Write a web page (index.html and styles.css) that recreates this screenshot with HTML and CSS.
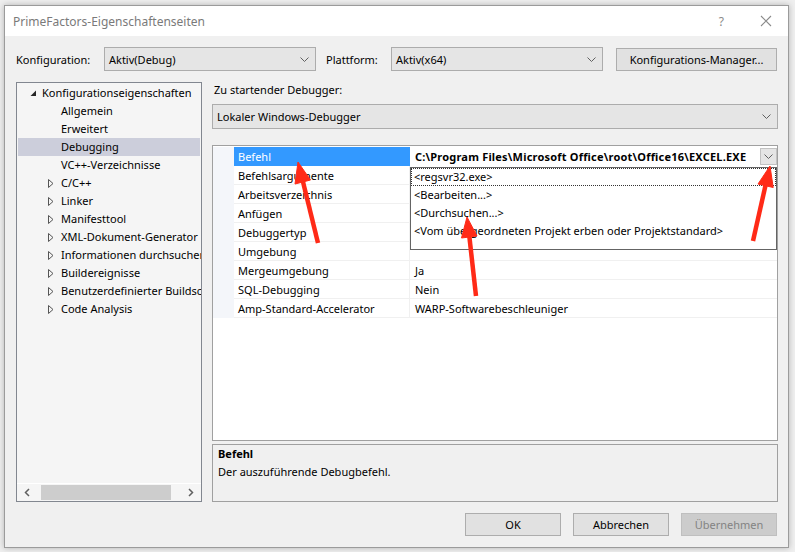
FILE: index.html
```html
<!DOCTYPE html>
<html lang="de">
<head>
    <meta charset="UTF-8">
    <title>PrimeFactors-Eigenschaftenseiten</title>
    <link rel="stylesheet" href="styles.css">
</head>
<body>
    <div class="window">
        <!-- Titelleiste -->
        <div class="titlebar">
            <span class="title">PrimeFactors-Eigenschaftenseiten</span>
            <div class="caption-buttons">
                <span class="help">?</span>
                <svg class="close" width="12" height="12" viewBox="0 0 12 12"><path d="M1 1L11 11M11 1L1 11" stroke="#8a8a8a" stroke-width="1.1" fill="none"/></svg>
            </div>
        </div>

        <div class="content">
            <!-- Konfiguration / Plattform -->
            <div class="config-row">
                <span class="field-label label-config">Konfiguration:</span>
                <div class="combo combo-config">
                    <span>Aktiv(Debug)</span>
                    <svg class="chevron" width="9" height="5" viewBox="0 0 9 5"><path d="M0.5 0.5L4.5 4.5L8.5 0.5" stroke="#606060" fill="none"/></svg>
                </div>
                <span class="field-label label-platform">Plattform:</span>
                <div class="combo combo-platform">
                    <span>Aktiv(x64)</span>
                    <svg class="chevron" width="9" height="5" viewBox="0 0 9 5"><path d="M0.5 0.5L4.5 4.5L8.5 0.5" stroke="#606060" fill="none"/></svg>
                </div>
                <button class="btn btn-manager">Konfigurations-Manager...</button>
            </div>

            <div class="main">
                <!-- Baum -->
                <div class="tree">
                    <ul class="tree-list">
                        <li class="node level0">
                            <svg class="expander" width="7" height="7" viewBox="0 0 7 7"><path d="M6 0.5L6 6L0.5 6Z" fill="#262626"/></svg>
                            <span>Konfigurationseigenschaften</span>
                        </li>
                        <li class="node level1"><span>Allgemein</span></li>
                        <li class="node level1"><span>Erweitert</span></li>
                        <li class="node level1 selected"><span>Debugging</span></li>
                        <li class="node level1"><span>VC++-Verzeichnisse</span></li>
                        <li class="node level1 collapsed"><svg class="expander" width="6" height="9" viewBox="0 0 6 9"><path d="M0.5 0.5L5 4.5L0.5 8.5Z" stroke="#555" fill="none"/></svg><span>C/C++</span></li>
                        <li class="node level1 collapsed"><svg class="expander" width="6" height="9" viewBox="0 0 6 9"><path d="M0.5 0.5L5 4.5L0.5 8.5Z" stroke="#555" fill="none"/></svg><span>Linker</span></li>
                        <li class="node level1 collapsed"><svg class="expander" width="6" height="9" viewBox="0 0 6 9"><path d="M0.5 0.5L5 4.5L0.5 8.5Z" stroke="#555" fill="none"/></svg><span>Manifesttool</span></li>
                        <li class="node level1 collapsed"><svg class="expander" width="6" height="9" viewBox="0 0 6 9"><path d="M0.5 0.5L5 4.5L0.5 8.5Z" stroke="#555" fill="none"/></svg><span>XML-Dokument-Generator</span></li>
                        <li class="node level1 collapsed"><svg class="expander" width="6" height="9" viewBox="0 0 6 9"><path d="M0.5 0.5L5 4.5L0.5 8.5Z" stroke="#555" fill="none"/></svg><span>Informationen durchsuchen</span></li>
                        <li class="node level1 collapsed"><svg class="expander" width="6" height="9" viewBox="0 0 6 9"><path d="M0.5 0.5L5 4.5L0.5 8.5Z" stroke="#555" fill="none"/></svg><span>Buildereignisse</span></li>
                        <li class="node level1 collapsed"><svg class="expander" width="6" height="9" viewBox="0 0 6 9"><path d="M0.5 0.5L5 4.5L0.5 8.5Z" stroke="#555" fill="none"/></svg><span>Benutzerdefinierter Buildschritt</span></li>
                        <li class="node level1 collapsed"><svg class="expander" width="6" height="9" viewBox="0 0 6 9"><path d="M0.5 0.5L5 4.5L0.5 8.5Z" stroke="#555" fill="none"/></svg><span>Code Analysis</span></li>
                    </ul>
                    <div class="hscroll">
                        <svg class="scroll-arrow" width="6" height="9" viewBox="0 0 6 9"><path d="M5 1L1.5 4.5L5 8" stroke="#606060" stroke-width="1.5" fill="none"/></svg>
                        <div class="scroll-track"><div class="scroll-thumb"></div></div>
                        <svg class="scroll-arrow" width="6" height="9" viewBox="0 0 6 9"><path d="M1 1L4.5 4.5L1 8" stroke="#606060" stroke-width="1.5" fill="none"/></svg>
                    </div>
                </div>

                <!-- Eigenschaften -->
                <div class="pane">
                    <div class="pane-label">Zu startender Debugger:</div>
                    <div class="combo combo-debugger">
                        <span>Lokaler Windows-Debugger</span>
                        <svg class="chevron" width="9" height="5" viewBox="0 0 9 5"><path d="M0.5 0.5L4.5 4.5L8.5 0.5" stroke="#606060" fill="none"/></svg>
                    </div>

                    <div class="propgrid">
                        <div class="prop-row selected">
                            <div class="gutter"></div>
                            <div class="prop-name">Befehl</div>
                            <div class="prop-value bold">
                                <span>C:\Program Files\Microsoft Office\root\Office16\EXCEL.EXE</span>
                                <span class="drop-btn"><svg width="9" height="5" viewBox="0 0 9 5"><path d="M0.5 0.5L4.5 4.5L8.5 0.5" stroke="#606060" fill="none"/></svg></span>
                            </div>
                        </div>
                        <div class="prop-row"><div class="gutter"></div><div class="prop-name">Befehlsargumente</div><div class="prop-value"></div></div>
                        <div class="prop-row"><div class="gutter"></div><div class="prop-name">Arbeitsverzeichnis</div><div class="prop-value"></div></div>
                        <div class="prop-row"><div class="gutter"></div><div class="prop-name">Anfügen</div><div class="prop-value"></div></div>
                        <div class="prop-row"><div class="gutter"></div><div class="prop-name">Debuggertyp</div><div class="prop-value"></div></div>
                        <div class="prop-row"><div class="gutter"></div><div class="prop-name">Umgebung</div><div class="prop-value"></div></div>
                        <div class="prop-row"><div class="gutter"></div><div class="prop-name">Mergeumgebung</div><div class="prop-value">Ja</div></div>
                        <div class="prop-row"><div class="gutter"></div><div class="prop-name">SQL-Debugging</div><div class="prop-value">Nein</div></div>
                        <div class="prop-row"><div class="gutter"></div><div class="prop-name">Amp-Standard-Accelerator</div><div class="prop-value">WARP-Softwarebeschleuniger</div></div>

                        <!-- aufgeklappte Liste -->
                        <ul class="dropdown">
                            <li class="focused">&lt;regsvr32.exe&gt;</li>
                            <li>&lt;Bearbeiten...&gt;</li>
                            <li>&lt;Durchsuchen...&gt;</li>
                            <li>&lt;Vom übergeordneten Projekt erben oder Projektstandard&gt;</li>
                        </ul>
                    </div>

                    <div class="description">
                        <div class="desc-title">Befehl</div>
                        <div class="desc-text">Der auszuführende Debugbefehl.</div>
                    </div>
                </div>
            </div>

            <div class="buttons">
                <button class="btn">OK</button>
                <button class="btn">Abbrechen</button>
                <button class="btn disabled">Übernehmen</button>
            </div>
        </div>
    </div>

    <!-- rote Pfeile -->
    <svg class="annotations" width="795" height="552" viewBox="0 0 795 552">
        <g fill="#ff2a17" stroke="#ff2a17">
            <line x1="318" y1="243" x2="302.8" y2="181" stroke-width="4.5"/>
            <polygon points="298,162 310.5,180 295,184" stroke-width="1"/>
            <line x1="476" y1="296" x2="469.3" y2="236" stroke-width="4.5"/>
            <polygon points="467,217 477,236 461.5,238" stroke-width="1"/>
            <line x1="753" y1="241" x2="765.6" y2="185" stroke-width="4.5"/>
            <polygon points="770,166 773.2,187.5 758,184" stroke-width="1"/>
        </g>
    </svg>
</body>
</html>
```

FILE: styles.css
```css
body {
    margin: 0;
    padding: 0;
    width: 795px;
    height: 552px;
    background: #efefef;
    font-family: "Noto Sans", "Open Sans", sans-serif;
    font-size: 11px;
    color: #000;
    position: relative;
    overflow: hidden;
}

ul {
    margin: 0;
    padding: 0;
    list-style: none;
}

/* Fenster */
.window {
    position: absolute;
    left: 4px;
    top: 5px;
    width: 783px;
    height: 541px;
    border: 1px solid #9b9b9b;
    background: #f0f0f0;
    box-shadow: 0 0 6px rgba(0, 0, 0, 0.25);
    display: flex;
    flex-direction: column;
}

/* Titelleiste */
.titlebar {
    height: 30px;
    background: #fff;
    display: flex;
    align-items: center;
    justify-content: space-between;
    padding: 0 16px 0 8px;
    flex-shrink: 0;
}

.title {
    color: #7a7a7a;
    font-size: 12px;
}

.caption-buttons {
    display: flex;
    align-items: center;
    gap: 36px;
}

.help {
    color: #8a8a8a;
    font-size: 12px;
}

/* Inhalt */
.content {
    padding: 11px 10px 0 11px;
    display: flex;
    flex-direction: column;
}

.config-row {
    display: flex;
    align-items: center;
    height: 24px;
}

.field-label {
    flex-shrink: 0;
}

.label-config {
    width: 88px;
}

.label-platform {
    width: 65px;
    margin-left: 10px;
}

.combo {
    box-sizing: border-box;
    height: 24px;
    background: #e5e5e5;
    border: 1px solid #acacac;
    display: flex;
    align-items: center;
    justify-content: space-between;
    padding: 0 6px 0 4px;
}

.combo-config,
.combo-platform {
    width: 212px;
}

.combo-debugger {
    width: 566px;
    height: 25px;
}

.btn {
    box-sizing: border-box;
    height: 23px;
    width: 96px;
    background: #e1e1e1;
    border: 1px solid #adadad;
    font-family: inherit;
    font-size: 11px;
    color: #000;
    padding: 0;
}

.btn-manager {
    width: 161px;
    margin-left: 13px;
}

.btn.disabled {
    background: #cccccc;
    border-color: #bfbfbf;
    color: #838383;
}

/* Hauptbereich */
.main {
    display: flex;
    gap: 10px;
    margin-top: 11px;
    height: 420px;
}

/* Baum */
.tree {
    box-sizing: border-box;
    width: 186px;
    height: 420px;
    border: 1px solid #828790;
    background: #f5f5f5;
    display: flex;
    flex-direction: column;
    justify-content: space-between;
    overflow: hidden;
}

.tree-list {
    padding: 1px 1px 0;
}

.node {
    height: 18px;
    line-height: 18px;
    display: flex;
    align-items: flex-start;
    white-space: nowrap;
    position: relative;
}

.node.level0 {
    padding-left: 24px;
}

.node.level1 {
    padding-left: 43px;
}

.node.selected {
    background: #cccedb;
}

.node .expander {
    position: absolute;
}

.level0 .expander {
    left: 12px;
    top: 6px;
}

.level1 .expander {
    left: 30px;
    top: 5px;
}

.hscroll {
    height: 17px;
    display: flex;
    align-items: center;
    border-top: 1px solid #fff;
    padding: 0 7px 0 7px;
    gap: 5px;
}

.scroll-track {
    flex: 1;
    height: 15px;
}

.scroll-thumb {
    margin-left: 6px;
    width: 130px;
    height: 15px;
    background: #cdcdcd;
}

/* Rechte Seite */
.pane {
    width: 566px;
    display: flex;
    flex-direction: column;
}

.pane-label {
    height: 16px;
    line-height: 16px;
    padding-left: 2px;
}

.combo-debugger {
    margin-top: 6px;
}

/* Eigenschaftenraster */
.propgrid {
    box-sizing: border-box;
    margin-top: 16px;
    height: 296px;
    border: 1px solid #a0a0a0;
    background: #fff;
    padding-top: 1px;
    position: relative;
}

.prop-row {
    display: flex;
    height: 19px;
    box-sizing: border-box;
}

.gutter {
    width: 21px;
    background: #f4f6fa;
    flex-shrink: 0;
}

.prop-name {
    box-sizing: border-box;
    width: 176px;
    padding-left: 4px;
    line-height: 19px;
    border-bottom: 1px solid #f0f0f0;
    border-right: 1px solid #f0f0f0;
    white-space: nowrap;
    flex-shrink: 0;
}

.prop-value {
    flex: 1;
    box-sizing: border-box;
    padding-left: 5px;
    line-height: 19px;
    border-bottom: 1px solid #f0f0f0;
    display: flex;
    justify-content: space-between;
    white-space: nowrap;
}

.prop-row.selected .prop-name {
    background: #3399ff;
    color: #fff;
    border-color: #3399ff;
}

.prop-row.selected .prop-value {
    border-bottom-color: #fff;
}

.bold {
    font-weight: bold;
    letter-spacing: 0.2px;
}

.drop-btn {
    box-sizing: border-box;
    width: 17px;
    height: 17px;
    margin-top: 1px;
    background: #e5e5e5;
    border: 1px solid #c2c2c2;
    display: flex;
    align-items: center;
    justify-content: center;
}

.dropdown {
    position: absolute;
    left: 197px;
    top: 21px;
    width: 367px;
    height: 83px;
    box-sizing: border-box;
    background: #fff;
    border: 1px solid #646464;
}

.dropdown li {
    height: 18px;
    line-height: 18px;
    padding-left: 3px;
    white-space: nowrap;
    box-sizing: border-box;
}

.dropdown li.focused {
    outline: 1px dotted #333;
    outline-offset: -1px;
}

/* Beschreibung */
.description {
    box-sizing: border-box;
    margin-top: 3px;
    height: 58px;
    border: 1px solid #a0a0a0;
    padding: 0 5px;
}

.desc-title {
    font-weight: bold;
    line-height: 17px;
}

.desc-text {
    line-height: 19px;
}

/* Schaltflächen */
.buttons {
    display: flex;
    justify-content: flex-end;
    gap: 12px;
    margin-top: 11px;
    padding-right: 1px;
}

/* Pfeile */
.annotations {
    position: absolute;
    left: 0;
    top: 0;
    pointer-events: none;
}
```
